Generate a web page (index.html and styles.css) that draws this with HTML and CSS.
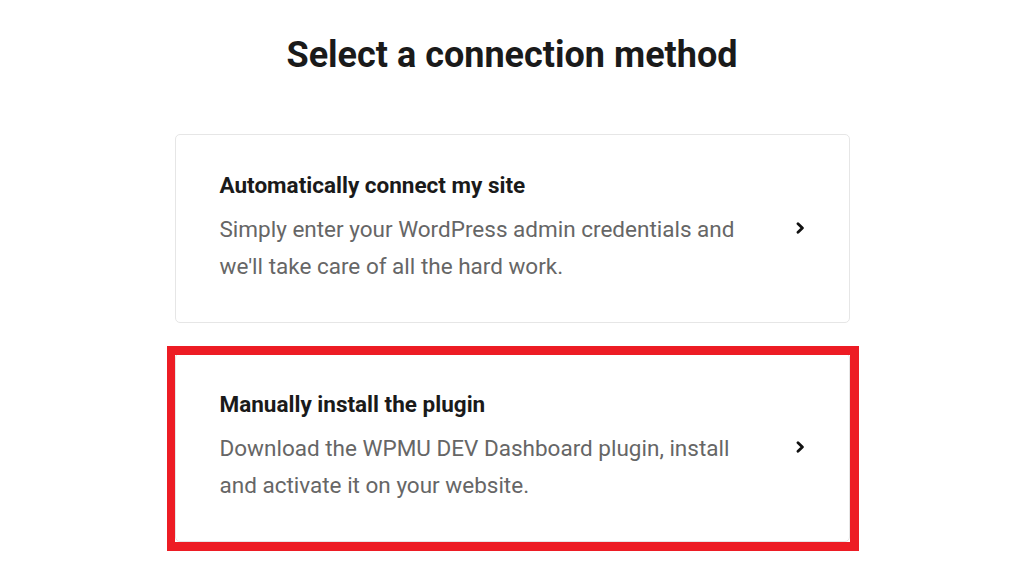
FILE: index.html
```html
<!DOCTYPE html>
<html>
<head>
<meta charset="utf-8">
<link rel="stylesheet" href="styles.css">
</head>
<body>
<main class="page">
  <h1 class="heading">Select a connection method</h1>
  <div class="options">
    <div class="option">
      <div class="option-text">
        <h2 class="option-title">Automatically connect my site</h2>
        <p class="option-desc">Simply enter your WordPress admin credentials and we'll take care of all the hard work.</p>
      </div>
      <svg class="chevron" width="9" height="12" viewBox="0 0 9 12"><path d="M2 1.8 L6.4 6 L2 10.2" fill="none" stroke="#111" stroke-width="2.8" stroke-linecap="round" stroke-linejoin="round"/></svg>
    </div>
    <div class="option highlighted">
      <div class="option-text">
        <h2 class="option-title">Manually install the plugin</h2>
        <p class="option-desc">Download the WPMU DEV Dashboard plugin, install and activate it on your website.</p>
      </div>
      <svg class="chevron" width="9" height="12" viewBox="0 0 9 12"><path d="M2 1.8 L6.4 6 L2 10.2" fill="none" stroke="#111" stroke-width="2.8" stroke-linecap="round" stroke-linejoin="round"/></svg>
      <div class="red-frame"></div>
    </div>
  </div>
</main>
</body>
</html>
```

FILE: styles.css
```css
html, body {
  margin: 0;
  padding: 0;
  background: #ffffff;
}
body {
  font-family: Roboto, "Liberation Sans", Arial, sans-serif;
  width: 1024px;
  height: 583px;
  overflow: hidden;
}
.page {
  display: flex;
  flex-direction: column;
  align-items: center;
  padding-top: 33px;
}
.heading {
  margin: 0;
  font-size: 36px;
  line-height: 44px;
  font-weight: 700;
  color: #1a1a1a;
}
.options {
  margin-top: 57px;
  width: 675px;
  display: flex;
  flex-direction: column;
  gap: 30px;
}
.option {
  position: relative;
  box-sizing: border-box;
  height: 189px;
  border: 1px solid #e6e6e6;
  border-radius: 5px;
  padding: 0 44px;
  display: flex;
  align-items: center;
  justify-content: space-between;
  background: #fff;
}
.option-text {
  width: 545px;
}
.option-title {
  margin: 0;
  font-size: 22.5px;
  line-height: 26px;
  font-weight: 700;
  color: #1a1a1a;
}
.option-desc {
  margin: 13px 0 0;
  font-size: 22.5px;
  line-height: 37px;
  font-weight: 400;
  color: #666666;
}
.chevron {
  display: block;
  flex: none;
  margin-top: -2px;
}
.red-frame {
  position: absolute;
  left: -9px;
  right: -10px;
  top: -8px;
  bottom: -10px;
  border-style: solid;
  border-color: #ed1c24;
  border-width: 9px 9px 9px 8px;
  pointer-events: none;
}
```
